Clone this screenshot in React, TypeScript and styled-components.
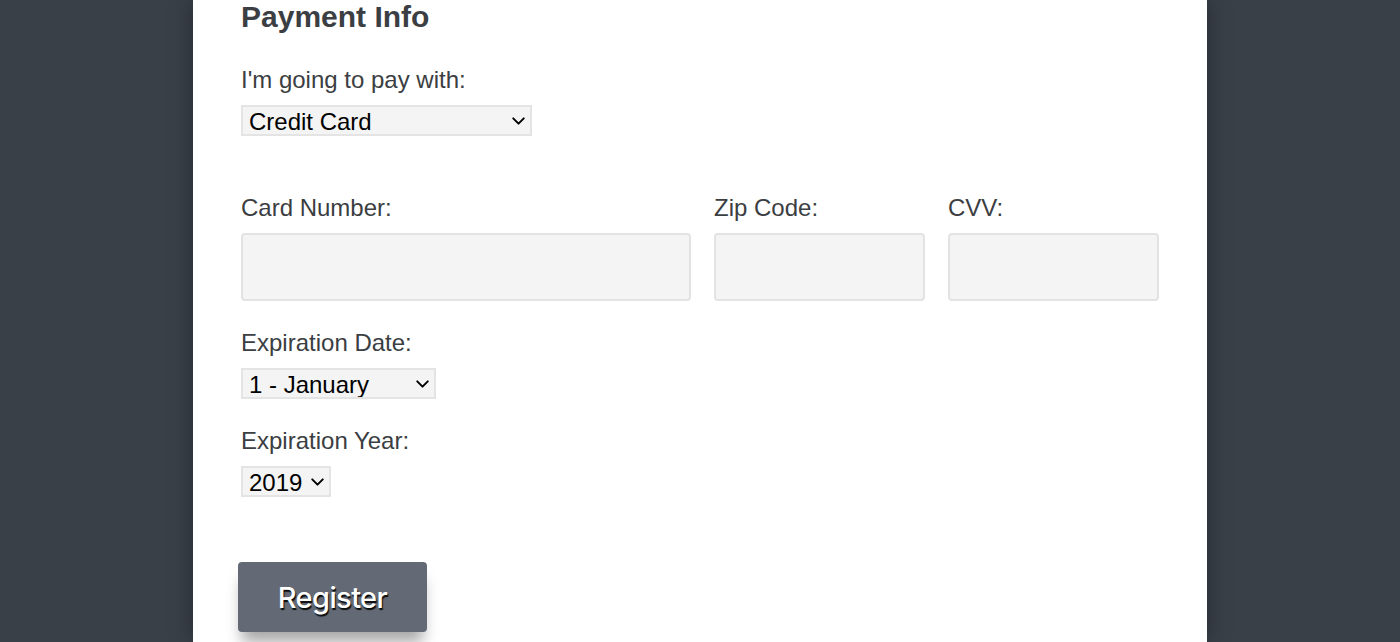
import React from "react";
import styled, { createGlobalStyle } from "styled-components";
import { ChevronDown } from "lucide-react";

const Global = createGlobalStyle`
  html, body { margin: 0; padding: 0; background: #3a4048; }
  body { font-family: "Liberation Sans", Arial, sans-serif; overflow: hidden; }
`;

const Page = styled.div`
  display: flex;
  justify-content: center;
  min-height: 642px;
`;

const Panel = styled.main`
  width: 1014px;
  box-sizing: border-box;
  background: #ffffff;
  padding: 0 48px 10px 48px;
  box-shadow: 0 0 22px rgba(0, 0, 0, 0.35);
  color: #3b3e42;
`;

const Title = styled.h2`
  margin: 0;
  font-size: 30px;
  line-height: 33px;
  font-weight: 700;
  color: #3b3e42;
`;

const Label = styled.label`
  display: block;
  font-size: 24px;
  line-height: 28px;
  color: #3b3e42;
`;

const Field = styled.div<{ $top: number }>`
  display: flex;
  flex-direction: column;
  gap: 11px;
  margin-top: ${(p) => p.$top}px;
`;

const SelectWrap = styled.div<{ $w: number }>`
  position: relative;
  width: ${(p) => p.$w}px;
  height: 31px;
`;

const Select = styled.select`
  appearance: none;
  -webkit-appearance: none;
  width: 100%;
  height: 100%;
  box-sizing: border-box;
  border: 2px solid #e4e4e4;
  background: #f4f4f4;
  border-radius: 0;
  padding: 1px 0 0 6px;
  font-family: "Liberation Sans", Arial, sans-serif;
  font-size: 24px;
  color: #000;
  outline: none;
`;

const Chevron = styled.span`
  position: absolute;
  right: 3px;
  top: 50%;
  transform: translateY(-50%);
  display: flex;
  pointer-events: none;
  color: #000;
`;

const CardRow = styled.div`
  display: grid;
  grid-template-columns: 450px 211px 211px;
  column-gap: 23px;
  margin-top: 58px;
`;

const Cell = styled.div`
  display: flex;
  flex-direction: column;
  gap: 11px;
`;

const Input = styled.input`
  box-sizing: border-box;
  width: 100%;
  height: 68px;
  border: 2px solid #e3e3e3;
  border-radius: 4px;
  background: #f4f4f4;
  outline: none;
  font-size: 24px;
  padding: 0 12px;
`;

const Button = styled.button`
  margin-top: 65px;
  margin-left: -3px;
  width: 189px;
  height: 70px;
  border: none;
  border-radius: 4px;
  background: #636a75;
  color: #ffffff;
  font-family: Inter, "Liberation Sans", sans-serif;
  font-size: 29px;
  font-weight: 500;
  letter-spacing: -0.6px;
  text-shadow: 1px 2px 1px rgba(0, 0, 0, 0.9);
  box-shadow: 0 14px 14px -4px rgba(0, 0, 0, 0.35);
  cursor: pointer;
`;

function Dropdown({ width, value, options }: { width: number; value: string; options: string[] }) {
  return (
    <SelectWrap $w={width}>
      <Select defaultValue={value}>
        {options.map((o) => (
          <option key={o}>{o}</option>
        ))}
      </Select>
      <Chevron>
        <ChevronDown size={21} strokeWidth={2.3} />
      </Chevron>
    </SelectWrap>
  );
}

export default function App() {
  return (
    <>
      <Global />
      <Page>
        <Panel>
          <Title>Payment Info</Title>
          <Field $top={33}>
            <Label>I'm going to pay with:</Label>
            <Dropdown width={291} value="Credit Card" options={["Credit Card", "PayPal", "Bitcoin"]} />
          </Field>
          <CardRow>
            <Cell>
              <Label>Card Number:</Label>
              <Input type="text" />
            </Cell>
            <Cell>
              <Label>Zip Code:</Label>
              <Input type="text" />
            </Cell>
            <Cell>
              <Label>CVV:</Label>
              <Input type="text" />
            </Cell>
          </CardRow>
          <Field $top={28}>
            <Label>Expiration Date:</Label>
            <Dropdown width={195} value="1 - January" options={["1 - January", "2 - February", "3 - March"]} />
          </Field>
          <Field $top={28}>
            <Label>Expiration Year:</Label>
            <Dropdown width={90} value="2019" options={["2019", "2020", "2021"]} />
          </Field>
          <Button type="button">Register</Button>
        </Panel>
      </Page>
    </>
  );
}
